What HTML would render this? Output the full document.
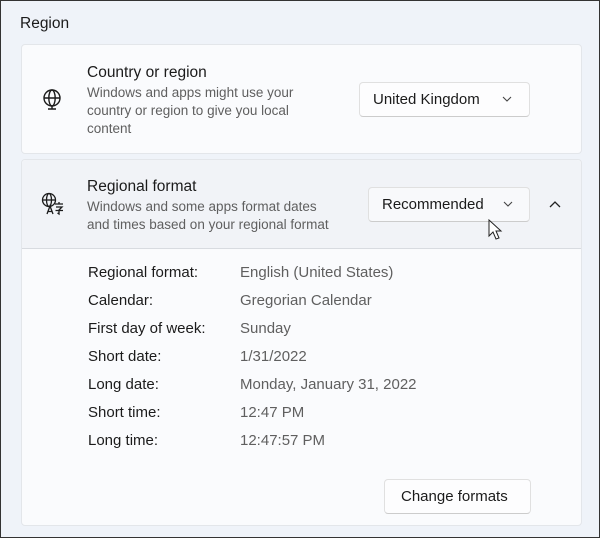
<!DOCTYPE html>
<html><head><style>
*{margin:0;padding:0;box-sizing:border-box}
body{width:600px;height:538px;background:#eff3f9;font-family:"Liberation Sans",sans-serif;color:#1b1b1b;position:relative;overflow:hidden;border:1px solid #333}
.abs{position:absolute}
.card{position:absolute;background:#fafbfd;border:1px solid #e3e6ea;border-radius:4px}
.t{font-size:15.5px;color:#1b1b1b}
.s{font-size:13.5px;color:#5f5f5f;line-height:18px}
.btn{position:absolute;background:#fdfdfe;border:1px solid #e0e0e0;border-bottom-color:#ccc;border-radius:4px;font-size:15px;color:#1b1b1b}
.row{position:absolute;left:87px;font-size:15px}
.row span{position:absolute;left:152px;color:#5f5f5f;white-space:nowrap}
</style></head><body>
<div class="abs" style="left:19px;top:14px;font-size:15.5px">Region</div>

<div class="card" style="left:20px;top:43px;width:561px;height:110px"></div>
<svg class="abs" style="left:39px;top:86px" width="24" height="24" viewBox="0 0 24 24" fill="none" stroke="#1b1b1b" stroke-width="1.4"><circle cx="12" cy="11" r="8"/><ellipse cx="12" cy="11" rx="3.2" ry="8"/><path d="M4 11h16M12 19v3M8 22h8"/></svg>
<div class="abs t" style="left:86px;top:63px">Country or region</div>
<div class="abs s" style="left:86px;top:83px;width:240px">Windows and apps might use your country or region to give you local content</div>
<div class="btn" style="left:358px;top:81px;width:171px;height:35px;padding:8px 0 0 13px">United Kingdom<svg class="abs" style="left:142px;top:13px" width="10" height="6" viewBox="0 0 10 6" fill="none" stroke="#444" stroke-width="1.1"><path d="M1 1l4 4 4-4"/></svg></div>

<div class="card" style="left:20px;top:158px;width:561px;height:367px;background:#fafbfd"></div>
<div class="abs" style="left:21px;top:159px;width:559px;height:89px;background:#f1f3f7;border-bottom:1px solid #d8dbe0;border-radius:4px 4px 0 0"></div>
<svg class="abs" style="left:39px;top:190px" width="26" height="26" viewBox="0 0 26 26" fill="none" stroke="#1b1b1b" stroke-width="1.3"><circle cx="9" cy="9" r="6.5"/><ellipse cx="9" cy="9" rx="2.5" ry="6.5"/><path d="M2.5 9h13"/><path d="M7 23l3-8 3 8M8 20.5h4" /><path d="M15 13h8M19 11v2M16 16h6l-3 3v4l-1.5-1M15.5 19.5h7.5"/></svg>
<div class="abs t" style="left:86px;top:177px">Regional format</div>
<div class="abs s" style="left:86px;top:197px;width:250px">Windows and some apps format dates and times based on your regional format</div>
<div class="btn" style="left:367px;top:186px;width:162px;height:35px;padding:8px 0 0 13px;background:#f8f9fb">Recommended<svg class="abs" style="left:134px;top:13px" width="10" height="6" viewBox="0 0 10 6" fill="none" stroke="#444" stroke-width="1.1"><path d="M1 1l4 4 4-4"/></svg></div>
<svg class="abs" style="left:548px;top:199px" width="12" height="8" viewBox="0 0 12 8" fill="none" stroke="#222" stroke-width="1.3"><path d="M1 7l5-5 5 5"/></svg>
<svg class="abs" style="left:487px;top:218px" width="16" height="22" viewBox="0 0 16 22"><path d="M1 1v16l4-4 3 7 3-1-3-7h5z" fill="#fff" stroke="#222" stroke-width="1"/></svg>

<div class="row" style="top:263px">Regional format:<span>English (United States)</span></div>
<div class="row" style="top:291px">Calendar:<span>Gregorian Calendar</span></div>
<div class="row" style="top:319px">First day of week:<span>Sunday</span></div>
<div class="row" style="top:347px">Short date:<span>1/31/2022</span></div>
<div class="row" style="top:375px">Long date:<span>Monday, January 31, 2022</span></div>
<div class="row" style="top:403px">Short time:<span>12:47 PM</span></div>
<div class="row" style="top:431px">Long time:<span>12:47:57 PM</span></div>

<div class="btn" style="left:383px;top:478px;width:147px;height:35px;padding:8px 0 0 16px">Change formats</div>
</body></html>
